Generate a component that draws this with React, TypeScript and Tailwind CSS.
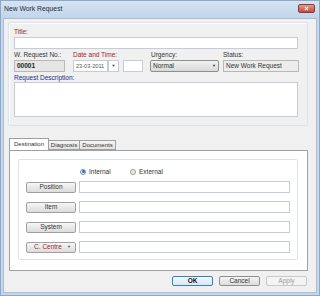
const font = { fontFamily: '"Liberation Sans", Arial, sans-serif' };

function Field({ className = "", children }: { className?: string; children?: React.ReactNode }) {
  return (
    <div className={`h-[12px] border border-[#c5ccd6] bg-white flex items-center px-[2px] whitespace-nowrap overflow-hidden ${className}`}>
      {children}
    </div>
  );
}

function SideButton({ label, red = false }: { label: string; red?: boolean }) {
  return (
    <div className="w-[50px] h-[11px] rounded-[2px] border border-[#a0a0a0] bg-gradient-to-b from-[#f6f6f6] to-[#dcdcdc] flex items-center justify-center text-[6.5px] relative">
      <span className={red ? "text-[#a32020] -ml-[6px]" : "text-[#333]"}>{label}</span>
      {red && <span className="absolute right-[4px] text-[4px] text-[#555]">▼</span>}
    </div>
  );
}

function Row({ label, red }: { label: string; red?: boolean }) {
  return (
    <div className="flex items-center gap-[3px] h-[12px]">
      <SideButton label={label} red={red} />
      <Field className="w-[211px]" />
    </div>
  );
}

export default function App() {
  return (
    <div style={font} className="w-[320px] h-[296px] bg-[#c3d6ec] border border-[#8fa8c4] flex flex-col text-[#333] overflow-hidden">
      {/* title bar */}
      <div className="h-[17px] flex items-center justify-between pl-[3px] pr-[4px] bg-gradient-to-b from-[#d5e4f4] to-[#c2d5eb]">
        <span className="text-[6.8px] text-[#1e2a3a]">New Work Request</span>
        <div className="w-[17px] h-[9px] mb-[2px] rounded-[2px] border border-[#8b3a3a] bg-gradient-to-b from-[#e19a8c] to-[#c04a3a] flex items-center justify-center text-white text-[7px] font-bold leading-none">
          ×
        </div>
      </div>

      {/* body */}
      <div className="flex-1 mx-[2px] mb-[2px] bg-[#f0f0f0] border border-[#a9bdd4] flex flex-col">
        {/* top group */}
        <div className="mt-[3px] ml-[4px] w-[300px] h-[104px] shrink-0 border border-[#dde3e8] rounded-[2px] shadow-[inset_1px_1px_0_#fff] px-[5px] pt-[5px] flex flex-col text-[6.5px]">
          <div className="h-[8px] leading-[8px] text-[#8c2a1c]">Title:</div>
          <Field className="mt-[1px] w-[284px]" />
          <div className="mt-[2px] flex h-[8px] leading-[8px]">
            <span className="w-[59px]">W. Request No.:</span>
            <span className="w-[78px] text-[#a01c1c]">Date and Time:</span>
            <span className="w-[72px]">Urgency:</span>
            <span>Status:</span>
          </div>
          <div className="mt-[1px] flex items-center h-[12px]">
            <div className="w-[51px] h-[12px] border border-[#b8b8b8] bg-[#e6e6e6] flex items-center px-[2px] font-bold text-[#222] text-[6.5px]">
              00001
            </div>
            <Field className="ml-[8px] w-[35px] text-[5.6px] text-[#555] px-[1px]">23-03-2011</Field>
            <div className="w-[11px] h-[12px] border border-[#c5ccd6] bg-white flex items-center justify-center text-[4px]">▼</div>
            <Field className="ml-[4px] w-[20px]" />
            <div className="ml-[7px] w-[69px] h-[12px] rounded-[2px] border border-[#8e8f8f] bg-gradient-to-b from-[#f2f2f2] to-[#d8d8d8] flex items-center justify-between px-[2px]">
              <span>Normal</span>
              <span className="text-[4px]">▼</span>
            </div>
            <div className="ml-[4px] w-[76px] h-[12px] border border-[#b8b8b8] bg-[#ececec] flex items-center px-[2px] whitespace-nowrap">
              New Work Request
            </div>
          </div>
          <div className="mt-[1px] h-[9px] leading-[9px] text-[#1c2a8c]">Request Description:</div>
          <div className="w-[284px] h-[35px] border border-[#c5ccd6] bg-white" />
        </div>

        {/* tabs */}
        <div className="mt-[12px] ml-[5px] flex items-end h-[12px] shrink-0 text-[6px]">
          <div className="h-[12px] w-[40px] border border-b-0 border-[#a0a0a0] bg-white flex items-center justify-center">Destination</div>
          <div className="h-[10px] w-[31px] border border-l-0 border-[#a0a0a0] bg-gradient-to-b from-[#f4f4f4] to-[#e2e2e2] flex items-center justify-center">Diagnosis</div>
          <div className="h-[10px] w-[36px] border border-l-0 border-[#a0a0a0] bg-gradient-to-b from-[#f4f4f4] to-[#e2e2e2] flex items-center justify-center">Documents</div>
        </div>
        <div className="ml-[5px] w-[299px] h-[121px] shrink-0 border border-[#a0a0a0] bg-white pt-[8px] pl-[8px]">
          <div className="w-[280px] h-[101px] border border-[#dde3e8] rounded-[2px] flex flex-col pl-[7px] text-[6.5px]">
            <div className="mt-[8px] ml-[54px] flex items-center h-[7px]">
              <span className="w-[6px] h-[6px] rounded-full border border-[#6b8fb5] bg-[#eef4fa] flex items-center justify-center">
                <span className="w-[3px] h-[3px] rounded-full bg-[#2a6fb8]" />
              </span>
              <span className="ml-[3px] w-[41px]">Internal</span>
              <span className="w-[6px] h-[6px] rounded-full border border-[#9a9a9a] bg-[#ececec]" />
              <span className="ml-[3px]">External</span>
            </div>
            <div className="mt-[6px] flex flex-col gap-[8px]">
              <Row label="Position" />
              <Row label="Item" />
              <Row label="System" />
              <Row label="C. Centre" red />
            </div>
          </div>
        </div>

        {/* dialog buttons */}
        <div className="mt-[5px] flex justify-end gap-[6px] pr-[9px] text-[6.5px]">
          <div className="w-[41px] h-[10px] rounded-[2px] border border-[#3c7fb1] bg-gradient-to-b from-[#f2f8fd] to-[#d6e9f7] flex items-center justify-center font-bold text-[#111]">OK</div>
          <div className="w-[41px] h-[10px] rounded-[2px] border border-[#8e8f8f] bg-gradient-to-b from-[#f4f4f4] to-[#dcdcdc] flex items-center justify-center">Cancel</div>
          <div className="w-[41px] h-[10px] rounded-[2px] border border-[#c8c8c8] bg-[#f4f4f4] flex items-center justify-center text-[#9a9a9a]">Apply</div>
        </div>
      </div>
    </div>
  );
}
